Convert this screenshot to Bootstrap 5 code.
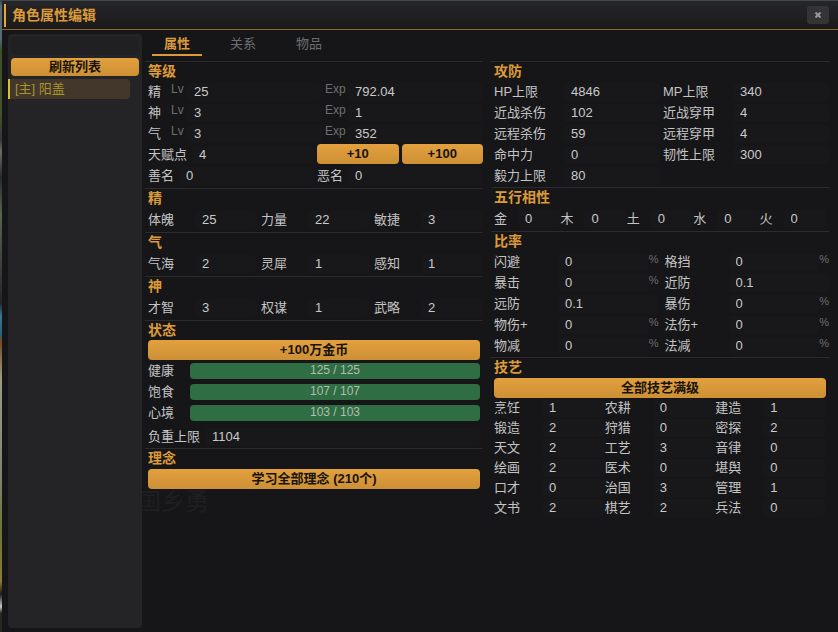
<!DOCTYPE html>
<html lang="zh-CN" data-bs-theme="dark">
<head>
<meta charset="utf-8">
<meta name="viewport" content="width=device-width, initial-scale=1">
<title>角色属性编辑</title>
<link href="https://cdn.jsdelivr.net/npm/bootstrap@5.3.0/dist/css/bootstrap.min.css" rel="stylesheet">
<style>
:root { --gold: #dc9a38; --ink: #161618; --line: #2c2c2e; --txt: #c4c4c4; --dim: #6e6e70; }
body {
  font-family: "Liberation Sans", "Noto Sans CJK SC", sans-serif;
  font-size: 13px; line-height: 20px; color: var(--txt);
  background: linear-gradient(#3c464c 0, #59697a 1%, #59697a 6%, #3c5226 8%, #46522d 18%, #33363a 22%, #6a6e62 24%, #262a2c 28%, #5a6350 34%, #23262a 48%, #3a7890 50%, #2a6080 53%, #7a4a20 54%, #9a9c88 60%, #7c8270 76%, #6c7434 84%, #8c7c38 92%, #1c1c1a 94%, #c8c8c8 96%, #2a2620 97%);
}
.editor { margin: 1px 0 0 2px; background: var(--ink); }
.titlebar { height: 29px; padding: 2px 9px 2px 2px; background: linear-gradient(#262628, #1a1a1c); border-bottom: 1px solid #8f6228; }
.titlebar h1 { font-size: 14px; line-height: 23px; color: var(--gold); border-left: 2px solid #e8a53c; padding-left: 6px; }
.close-btn { width: 22px; height: 18px; background: #343436; color: #98989a; border-radius: 3px; }
.workspace { padding: 4px 0 4px 6px; }
.sidebar { width: 134px; padding: 3px; background: #242426; border-radius: 4px; }
.search { height: 18px; background: #202022; border-radius: 5px; color: var(--txt); padding: 0 6px; }
.person { width: 122px; height: 20px; margin: 3px 0 0 -3px; padding: 0 5px; background: #43362a; color: #a8942c; border-left: 2px solid #e0bc34; border-radius: 0 4px 4px 0; }
.person:hover { color: #c8b040; }
.gold-btn {
  --bs-btn-font-size: 13px; --bs-btn-line-height: 20px; --bs-btn-padding-y: 0; --bs-btn-padding-x: 4px;
  --bs-btn-color: #17130c; --bs-btn-hover-color: #17130c; --bs-btn-border-width: 0; --bs-btn-border-radius: 4px;
  font-weight: 700; height: 20px; background: linear-gradient(#e3a03e, #cd9035);
}
.gold-btn:hover { background: #eaac50; }
.refresh { --bs-btn-line-height: 18px; height: 18px; margin-top: 3px; }
.main { min-width: 0; padding: 0 9px 0 3px; }
.tabs { padding: 0 7px; gap: 16px; }
.tabs .nav-link { color: var(--dim); padding: 0 12px; line-height: 20px; border-bottom: 2px solid transparent; }
.tabs .nav-link.active { color: var(--gold); font-weight: 700; border-color: var(--gold); }
.columns { gap: 8px; margin-top: 5px; z-index: 1; }
.columns > div { flex: 1 1 0; min-width: 0; }
.section { border-top: 1px solid var(--line); padding: 0 0 1px 3px; }
.levels { padding-bottom: 2px; }
.trio { padding-bottom: 2px; }
.elements { padding-bottom: 2px; }
.trio .cells, .elements .cells { margin-top: 1px; }
.section h2 { font-size: 14px; line-height: 19px; color: var(--gold); font-weight: 700; margin: 0; }
.inset { padding-right: 3px; }
.wide { margin-top: 1px; }
.line { height: 21px; gap: 3px; }
.line > * { flex: 1 1 0; min-width: 0; }
.line > .level { flex-basis: 39px; }
.line > .exp { flex-basis: 23px; }
.btn-pair { gap: 3px; }
.cells { display: grid; grid-auto-rows: 21px; }
.c2 { grid-template-columns: repeat(2, minmax(0, 1fr)); column-gap: 3px; }
.c3 { grid-template-columns: repeat(3, minmax(0, 1fr)); }
.c5 { grid-template-columns: repeat(5, minmax(0, 1fr)); }
.w-attr { column-gap: 4px; }
.w-rate { column-gap: 6px; }
.w-skill { grid-auto-rows: 20px; }
.field { display: flex; align-items: center; min-width: 0; height: 100%; white-space: nowrap; }
.field > input {
  flex: 1 1 0; min-width: 0; width: 0; height: 18px; padding: 0 7px; border: 0; border-radius: 4px;
  background: #18181a; color: #cacaca;
}
.field > input:focus { outline: 1px solid #7d5825; }
.field > .cap { flex: none; padding-right: 5px; }
.unit { color: var(--dim); font-size: 12px; line-height: 16px; align-self: flex-start; flex: none; }
.level .cap { width: 23px; }
.level .unit { width: 16px; }
.exp .unit { width: 23px; }
.pct { color: var(--dim); font-size: 11px; line-height: 16px; align-self: flex-start; }
.w-attr .cap { width: 47px; }
.w-combat .cap { width: 70px; }
.w-elem .cap { width: 24px; }
.w-rate .cap { width: 64px; }
.w-skill .cap { width: 48px; }
.status-row { height: 21px; }
.status-row > span { width: 42px; flex: none; }
.meter { height: 16px; border-radius: 4px; background: #242426; }
.meter .progress-bar { background: #2e6e42; color: #b4bcb4; font-size: 12px; line-height: 14px; justify-content: flex-start; }
.burden { height: 21px; margin-top: 3px; }
.burden .cap { width: 57px; }
.ghost { left: -5px; top: 455px; font-size: 24px; line-height: 26px; color: #1f1f21; }
</style>
</head>
<body class="min-vh-100 d-flex flex-column">
<div class="editor flex-grow-1 d-flex flex-column">
  <header class="titlebar d-flex align-items-center justify-content-between">
    <h1 class="m-0 fw-bold">角色属性编辑</h1>
    <button type="button" class="close-btn btn p-0 border-0 d-flex align-items-center justify-content-center" aria-label="关闭">
      <svg width="6" height="6" viewBox="0 0 6 6" stroke="currentColor" stroke-width="2"><path d="M.5 .5l5 5M5.5 .5l-5 5"/></svg>
    </button>
  </header>
  <div class="workspace d-flex flex-grow-1">
    <aside class="sidebar d-flex flex-column flex-shrink-0">
      <input class="search border-0 w-100" type="text" aria-label="搜索角色">
      <button type="button" class="btn gold-btn refresh w-100">刷新列表</button>
      <a href="#" class="person d-block text-decoration-none">[主] 阳盖</a>
    </aside>
    <main class="main flex-grow-1 position-relative overflow-hidden">
      <span class="ghost position-absolute" aria-hidden="true">国乡勇</span>
      <nav class="tabs nav">
        <a class="nav-link active" aria-current="page" href="#">属性</a>
        <a class="nav-link" href="#">关系</a>
        <a class="nav-link" href="#">物品</a>
      </nav>
      <div class="columns d-flex position-relative">
        <div>
          <section class="section levels">
            <h2>等级</h2>
            <div class="line d-flex">
              <label class="field level"><span class="cap">精</span><span class="unit">Lv</span><input type="text" value="25"></label>
              <label class="field exp"><span class="unit">Exp</span><input type="text" value="792.04"></label>
            </div>
            <div class="line d-flex">
              <label class="field level"><span class="cap">神</span><span class="unit">Lv</span><input type="text" value="3"></label>
              <label class="field exp"><span class="unit">Exp</span><input type="text" value="1"></label>
            </div>
            <div class="line d-flex">
              <label class="field level"><span class="cap">气</span><span class="unit">Lv</span><input type="text" value="3"></label>
              <label class="field exp"><span class="unit">Exp</span><input type="text" value="352"></label>
            </div>
            <div class="line d-flex">
              <label class="field"><span class="cap">天赋点</span><input type="text" value="4"></label>
              <div class="btn-pair d-flex">
                <button type="button" class="btn gold-btn flex-fill w-50">+10</button>
                <button type="button" class="btn gold-btn flex-fill w-50">+100</button>
              </div>
            </div>
            <div class="line d-flex">
              <label class="field"><span class="cap">善名</span><input type="text" value="0"></label>
              <label class="field"><span class="cap">恶名</span><input type="text" value="0"></label>
            </div>
          </section>
          <section class="section trio">
            <h2>精</h2>
            <div class="cells c3 w-attr">
              <label class="field"><span class="cap">体魄</span><input type="text" value="25"></label>
              <label class="field"><span class="cap">力量</span><input type="text" value="22"></label>
              <label class="field"><span class="cap">敏捷</span><input type="text" value="3"></label>
            </div>
          </section>
          <section class="section trio">
            <h2>气</h2>
            <div class="cells c3 w-attr">
              <label class="field"><span class="cap">气海</span><input type="text" value="2"></label>
              <label class="field"><span class="cap">灵犀</span><input type="text" value="1"></label>
              <label class="field"><span class="cap">感知</span><input type="text" value="1"></label>
            </div>
          </section>
          <section class="section trio">
            <h2>神</h2>
            <div class="cells c3 w-attr">
              <label class="field"><span class="cap">才智</span><input type="text" value="3"></label>
              <label class="field"><span class="cap">权谋</span><input type="text" value="1"></label>
              <label class="field"><span class="cap">武略</span><input type="text" value="2"></label>
            </div>
          </section>
          <section class="section">
            <h2>状态</h2>
            <div class="inset">
              <button type="button" class="btn gold-btn w-100 d-block">+100万金币</button>
              <div class="status-row d-flex align-items-center"><span>健康</span>
                <div class="progress meter flex-grow-1" role="progressbar" aria-label="健康" aria-valuenow="125" aria-valuemin="0" aria-valuemax="125"><div class="progress-bar w-100">125 / 125</div></div></div>
              <div class="status-row d-flex align-items-center"><span>饱食</span>
                <div class="progress meter flex-grow-1" role="progressbar" aria-label="饱食" aria-valuenow="107" aria-valuemin="0" aria-valuemax="107"><div class="progress-bar w-100">107 / 107</div></div></div>
              <div class="status-row d-flex align-items-center"><span>心境</span>
                <div class="progress meter flex-grow-1" role="progressbar" aria-label="心境" aria-valuenow="103" aria-valuemin="0" aria-valuemax="103"><div class="progress-bar w-100">103 / 103</div></div></div>
              <div class="burden"><label class="field"><span class="cap">负重上限</span><input type="text" value="1104"></label></div>
            </div>
          </section>
          <section class="section">
            <h2>理念</h2>
            <div class="inset wide"><button type="button" class="btn gold-btn w-100 d-block">学习全部理念 (210个)</button></div>
          </section>
        </div>
        <div>
          <section class="section">
            <h2>攻防</h2>
            <div class="cells c2 w-combat">
              <label class="field"><span class="cap">HP上限</span><input type="text" value="4846"></label>
              <label class="field"><span class="cap">MP上限</span><input type="text" value="340"></label>
              <label class="field"><span class="cap">近战杀伤</span><input type="text" value="102"></label>
              <label class="field"><span class="cap">近战穿甲</span><input type="text" value="4"></label>
              <label class="field"><span class="cap">远程杀伤</span><input type="text" value="59"></label>
              <label class="field"><span class="cap">远程穿甲</span><input type="text" value="4"></label>
              <label class="field"><span class="cap">命中力</span><input type="text" value="0"></label>
              <label class="field"><span class="cap">韧性上限</span><input type="text" value="300"></label>
              <label class="field"><span class="cap">毅力上限</span><input type="text" value="80"></label>
            </div>
          </section>
          <section class="section elements">
            <h2>五行相性</h2>
            <div class="cells c5 w-elem inset">
              <label class="field"><span class="cap">金</span><input type="text" value="0"></label>
              <label class="field"><span class="cap">木</span><input type="text" value="0"></label>
              <label class="field"><span class="cap">土</span><input type="text" value="0"></label>
              <label class="field"><span class="cap">水</span><input type="text" value="0"></label>
              <label class="field"><span class="cap">火</span><input type="text" value="0"></label>
            </div>
          </section>
          <section class="section">
            <h2>比率</h2>
            <div class="cells c2 w-rate">
              <label class="field"><span class="cap">闪避</span><input type="text" value="0"><span class="pct">%</span></label>
              <label class="field"><span class="cap">格挡</span><input type="text" value="0"><span class="pct">%</span></label>
              <label class="field"><span class="cap">暴击</span><input type="text" value="0"><span class="pct">%</span></label>
              <label class="field"><span class="cap">近防</span><input type="text" value="0.1"></label>
              <label class="field"><span class="cap">远防</span><input type="text" value="0.1"></label>
              <label class="field"><span class="cap">暴伤</span><input type="text" value="0"><span class="pct">%</span></label>
              <label class="field"><span class="cap">物伤+</span><input type="text" value="0"><span class="pct">%</span></label>
              <label class="field"><span class="cap">法伤+</span><input type="text" value="0"><span class="pct">%</span></label>
              <label class="field"><span class="cap">物减</span><input type="text" value="0"><span class="pct">%</span></label>
              <label class="field"><span class="cap">法减</span><input type="text" value="0"><span class="pct">%</span></label>
            </div>
          </section>
          <section class="section">
            <h2>技艺</h2>
            <div class="inset wide">
              <button type="button" class="btn gold-btn w-100 d-block">全部技艺满级</button>
              <div class="cells c3 w-skill">
                <label class="field"><span class="cap">烹饪</span><input type="text" value="1"></label>
                <label class="field"><span class="cap">农耕</span><input type="text" value="0"></label>
                <label class="field"><span class="cap">建造</span><input type="text" value="1"></label>
                <label class="field"><span class="cap">锻造</span><input type="text" value="2"></label>
                <label class="field"><span class="cap">狩猎</span><input type="text" value="0"></label>
                <label class="field"><span class="cap">密探</span><input type="text" value="2"></label>
                <label class="field"><span class="cap">天文</span><input type="text" value="2"></label>
                <label class="field"><span class="cap">工艺</span><input type="text" value="3"></label>
                <label class="field"><span class="cap">音律</span><input type="text" value="0"></label>
                <label class="field"><span class="cap">绘画</span><input type="text" value="2"></label>
                <label class="field"><span class="cap">医术</span><input type="text" value="0"></label>
                <label class="field"><span class="cap">堪舆</span><input type="text" value="0"></label>
                <label class="field"><span class="cap">口才</span><input type="text" value="0"></label>
                <label class="field"><span class="cap">治国</span><input type="text" value="3"></label>
                <label class="field"><span class="cap">管理</span><input type="text" value="1"></label>
                <label class="field"><span class="cap">文书</span><input type="text" value="2"></label>
                <label class="field"><span class="cap">棋艺</span><input type="text" value="2"></label>
                <label class="field"><span class="cap">兵法</span><input type="text" value="0"></label>
              </div>
            </div>
          </section>
        </div>
      </div>
    </main>
  </div>
</div>
<script src="https://cdn.jsdelivr.net/npm/bootstrap@5.3.0/dist/js/bootstrap.bundle.min.js"></script>
</body>
</html>
